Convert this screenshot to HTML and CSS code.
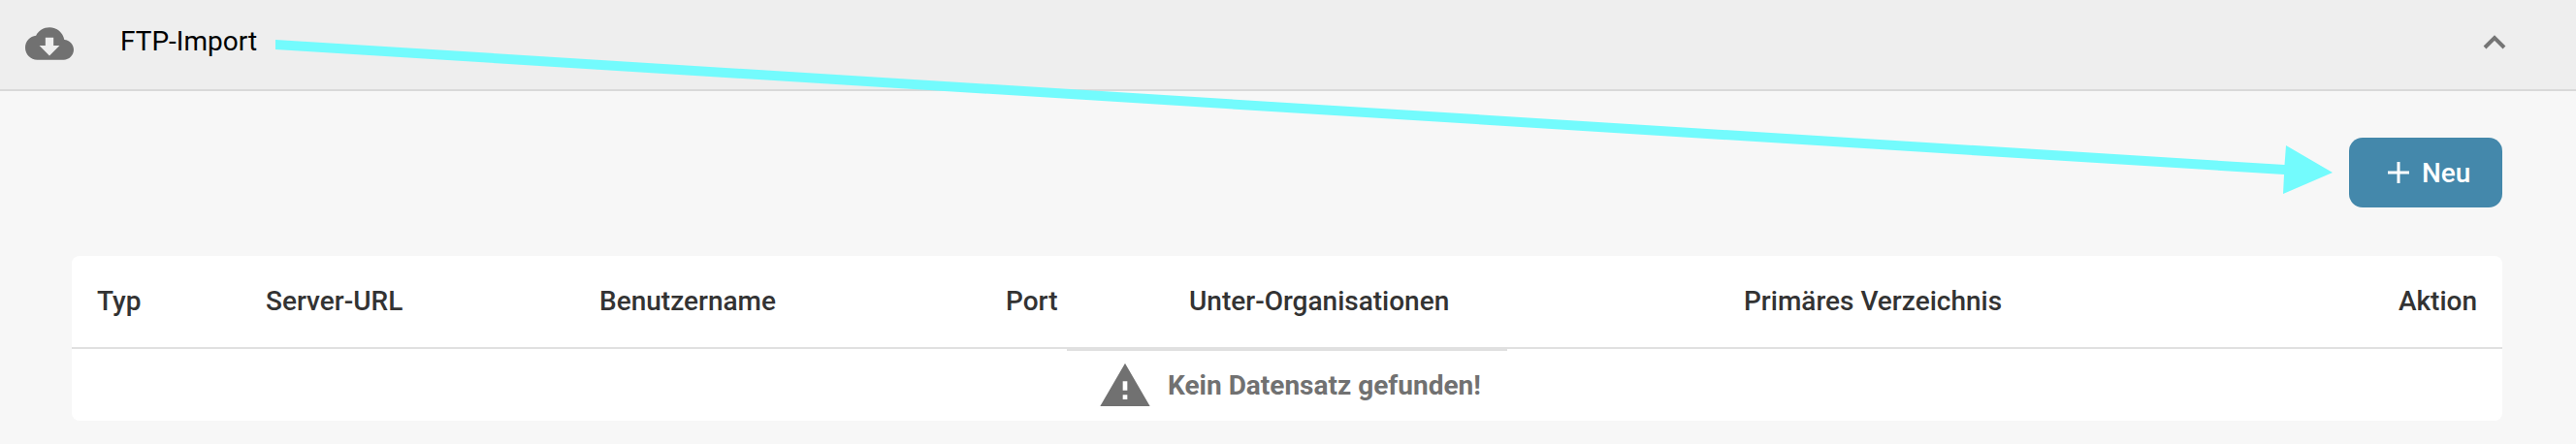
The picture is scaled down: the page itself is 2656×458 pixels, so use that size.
FILE: index.html
```html
<!DOCTYPE html>
<html lang="de">
<head>
<meta charset="utf-8">
<title>FTP-Import</title>
<link rel="stylesheet" href="styles.css">
</head>
<body>
<section class="panel">
  <header class="panel-header">
    <svg class="cloud" viewBox="0 0 24 24"><path d="M19.35 10.04C18.67 6.59 15.64 4 12 4 9.11 4 6.6 5.64 5.35 8.04 2.34 8.36 0 10.91 0 14c0 3.31 2.69 6 6 6h13c2.76 0 5-2.24 5-5 0-2.64-2.05-4.78-4.65-4.96zM17 13l-5 5-5-5h3V9h4v4h3z"/></svg>
    <h1 class="panel-title">FTP-Import</h1>
    <svg class="chevron" viewBox="0 0 24 16"><path d="M2 13L12 3l10 10"/></svg>
  </header>
  <div class="panel-body">
    <div class="toolbar">
      <button class="new-button" type="button">
        <svg class="plus" viewBox="0 0 22 22"><path d="M11 0v22M0 11h22"/></svg>
        <span class="new-label">Neu</span>
      </button>
    </div>
    <div class="table">
      <div class="table-head">
        <span>Typ</span>
        <span>Server-URL</span>
        <span>Benutzername</span>
        <span>Port</span>
        <span>Unter-Organisationen</span>
        <span>Primäres Verzeichnis</span>
        <span class="action">Aktion</span>
      </div>
      <div class="empty">
        <svg class="warning" viewBox="0 0 24 24"><path d="M1 21h22L12 2 1 21zm12-3h-2v-2h2v2zm0-4h-2v-4h2v4z"/></svg>
        <span>Kein Datensatz gefunden!</span>
      </div>
    </div>
  </div>
  <svg class="arrow" viewBox="0 0 2656 458"><path d="M284 41L2355.5 170L2357 150L2405 178L2354 200L2355 180L284 51z"/></svg>
</section>
</body>
</html>
```
FILE: styles.css
```css
* { box-sizing: border-box; }
body {
  margin: 0;
  background: #f7f7f7;
  font-family: Roboto, "Liberation Sans", sans-serif;
  font-size: 28px;
}
svg { display: block; flex: none; }
.panel { position: relative; height: 458px; overflow: hidden; }
.panel-header {
  display: flex;
  align-items: center;
  height: 94px;
  padding: 0 72px 4px 26px;
  background: #eee;
  border-bottom: 2px solid #d9d9d9;
}
.cloud { width: 50px; height: 50px; margin-top: 2px; fill: #717171; }
.panel-title {
  margin: 0 auto 0 48px;
  padding-bottom: 3px;
  font-size: 28px;
  font-weight: 400;
  line-height: 36px;
  color: #000;
}
.chevron { width: 24px; height: 16px; fill: none; stroke: #757575; stroke-width: 4; }
.panel-body { padding: 48px 76px 24px 74px; }
.toolbar { display: flex; justify-content: flex-end; margin-bottom: 50px; }
.new-button {
  display: flex;
  align-items: center;
  justify-content: flex-start;
  gap: 13px;
  width: 158px;
  height: 72px;
  padding: 0 0 0 40px;
  border: 0;
  border-radius: 14px;
  background: #4488ab;
  color: #fff;
  font: 500 28px/36px Roboto, "Liberation Sans", sans-serif;
}
.new-label { padding-top: 2px; }
.plus { width: 22px; height: 22px; fill: none; stroke: #fff; stroke-width: 3; }
.table { height: 170px; border-radius: 8px; background: #fff; overflow: hidden; }
.table-head {
  display: grid;
  grid-template-columns: 174px 344px 419px 189px 572px 1fr auto;
  align-items: center;
  height: 96px;
  padding: 0 26px 2px;
  border-bottom: 2px solid #e0e0e0;
  color: #333;
  font-weight: 500;
}
.action { text-align: right; }
.empty {
  display: flex;
  align-items: flex-start;
  gap: 16px;
  width: 454px;
  height: 74px;
  margin: 0 0 0 1026px;
  padding: 8px 0 0 32px;
  border-top: 2px solid #e0e0e0;
  color: #717171;
  font-weight: 700;
  line-height: 56px;
  white-space: nowrap;
}
.warning { width: 56px; height: 56px; fill: #717171; }
.arrow {
  position: absolute;
  top: 0;
  left: 0;
  width: 2656px;
  height: 458px;
  fill: #73fbfd;
  pointer-events: none;
}
```
